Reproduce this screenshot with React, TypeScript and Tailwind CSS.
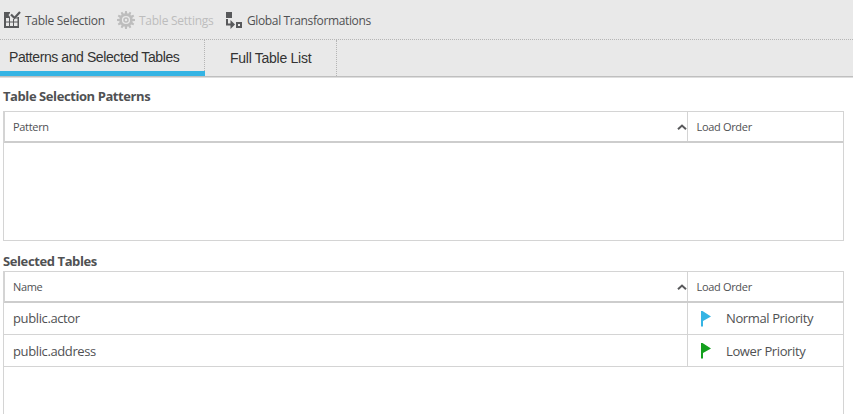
import type { ReactNode } from "react";

function TableSelectionIcon() {
  return (
    <svg width="18" height="18" viewBox="0 0 18 18" className="shrink-0">
      <path fill="#58595b" d="M1 1h6v1L5.500 4 7 6v1H1zM1 1h2v16H1zM1 15h15v2H1zM14.500 6H16v11h-1.500zM6 6h1v9H6zM10 8h1v7h-1zM3 10.500h12v1H3zM12.500 6.500H16v1h-3.500z" />
      <path d="M8 3.500L11.500 7 17 1" fill="none" stroke="#58595b" strokeWidth="2.200" />
    </svg>
  );
}

function GearIcon() {
  const teeth = [0, 30, 60, 90, 120, 150, 180, 210, 240, 270, 300, 330];
  return (
    <svg width="18" height="18" viewBox="-9 -9 18 18" className="shrink-0">
      <g fill="#bdbdbd">
        {teeth.map((a) => (
          <path key={a} d="M-1.300-6L-.9-9H.9L1.300-6z" transform={`rotate(${a})`} />
        ))}
      </g>
      <circle r="5.400" fill="none" stroke="#bdbdbd" strokeWidth="2.600" />
      <circle r="2" fill="none" stroke="#bdbdbd" strokeWidth="1.500" />
    </svg>
  );
}

function TransformIcon() {
  return (
    <svg width="18" height="18" viewBox="0 0 18 18" className="shrink-0">
      <path fill="#58595b" d="M1 1h6v6H1z" />
      <path d="M2 8v5.500h5" fill="none" stroke="#58595b" strokeWidth="2" />
      <path fill="#58595b" d="M5.500 9l4.500 4.500L5.500 18z" />
      <path d="M12 12h4v4h-4z" fill="none" stroke="#58595b" strokeWidth="2" />
    </svg>
  );
}

function Flag({ color }: { color: string }) {
  return (
    <svg width="12" height="16" viewBox="0 0 12 16" className="shrink-0">
      <path fill={color} d="M1 0h1.500L11 5.500 3 10V15.500H1z" />
    </svg>
  );
}

function Header({ label }: { label: string }) {
  return (
    <div className="flex h-[31px] border-b-2 border-l border-b-[#cdcdcd] border-l-[#d4d4d4] text-[11px] tracking-[-0.32px]">
      <div className="flex w-[683px] items-center justify-between border-r border-[#d4d4d4] pl-2 pt-px">
        <span>{label}</span>
        <svg width="10" height="8" viewBox="0 0 10 8">
          <path d="M1 6.200L5 2.500l4 3.700" fill="none" stroke="#58595b" strokeWidth="2" />
        </svg>
      </div>
      <div className="flex items-center pl-[8.500px] pt-px">
        <span>Load Order</span>
      </div>
    </div>
  );
}

function Row({ name, color, children }: { name: ReactNode; color: string; children: ReactNode }) {
  return (
    <div className="flex h-8 border-b border-[#d4d4d4] text-[13px] tracking-[-0.38px]">
      <div className="flex w-[684px] items-center border-r border-[#d4d4d4] pl-[9px] pt-px">{name}</div>
      <div className="flex items-center pl-3 pt-px">
        <Flag color={color} />
        <div className="pl-[14px]">{children}</div>
      </div>
    </div>
  );
}

export default function App() {
  return (
    <div className="flex h-[414px] w-[853px] flex-col overflow-hidden whitespace-nowrap bg-white font-['Open_Sans','Noto_Sans',sans-serif] text-[#505153]">
      <div className="flex h-10 shrink-0 items-center border-b border-dotted border-[#b5b5b5] bg-[#e9e9e9] pl-[3px] pt-px text-[12px]">
        <TableSelectionIcon />
        <span className="ml-1 w-[92px] pt-[2px] tracking-[-0.3px]">Table Selection</span>
        <GearIcon />
        <span className="ml-[4px] w-[86px] pt-[2px] tracking-[-0.25px] text-[#bdbdbd]">Table Settings</span>
        <TransformIcon />
        <span className="ml-1 pt-[2px] tracking-[-0.37px]">Global Transformations</span>
      </div>
      <div className="flex h-[37px] shrink-0 border-b border-[#bfbfbf] bg-[#e9e9e9] font-['Liberation_Sans',Arial,sans-serif] text-[14px] text-[#333]">
        <div className="flex w-[205px] flex-col">
          <div className="flex h-[31px] items-center border-r border-dotted border-[#b5b5b5] pl-[9px] pt-1">
            <span className="tracking-[-0.41px]">Patterns and Selected Tables</span>
          </div>
          <div className="h-[5px] bg-[#35b4e4]" />
        </div>
        <div className="flex w-[132px] items-center border-r border-dotted border-[#b5b5b5] pl-[25px]">
          <span className="tracking-[-0.27px]">Full Table List</span>
        </div>
      </div>
      <div className="flex h-[34px] shrink-0 items-center border-t border-[#dedede] pl-[3px] pt-[5px] text-[13px] font-bold">
        <span className="tracking-[-0.42px]">Table Selection Patterns</span>
      </div>
      <div className="ml-[3px] h-[130px] w-[841px] shrink-0 border border-[#d4d4d4]">
        <Header label="Pattern" />
      </div>
      <div className="flex h-[30px] shrink-0 items-center pl-[3px] pt-[11px] text-[13px] font-bold">
        <span className="tracking-[-0.4px]">Selected Tables</span>
      </div>
      <div className="ml-[3px] w-[841px] flex-1 border border-b-0 border-[#d4d4d4]">
        <Header label="Name" />
        <Row name={<span>public.actor</span>} color="#35b4e4">
          <span>Normal Priority</span>
        </Row>
        <Row name={<span className="pt-[2px]">public.address</span>} color="#14a01e">
          <span className="block pt-[2px]">Lower Priority</span>
        </Row>
      </div>
    </div>
  );
}
